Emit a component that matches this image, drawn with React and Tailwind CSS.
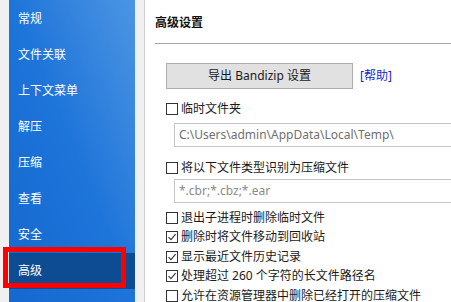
import React from "react";

const FONT = { fontFamily: '"Noto Sans", "Noto Sans CJK SC", sans-serif' };

function Box({ checked }) {
  return (
    <span className="w-[12px] h-[12px] border border-[#333333] bg-white flex items-center justify-center shrink-0">
      {checked && (
        <svg width="10" height="10" viewBox="0 0 10 10">
          <path d="M1.5 5.2 L4 7.6 L8.6 2.2" fill="none" stroke="#333" strokeWidth="1.1" />
        </svg>
      )}
    </span>
  );
}

function Check({ checked, label, h = "h-[16px]", mt = "" }) {
  return (
    <div className={`flex items-center ${h} ${mt}`}>
      <Box checked={checked} />
      <span className="ml-[3px] text-[12px] leading-[16px] text-[#1a1a1a] whitespace-nowrap">{label}</span>
    </div>
  );
}

export default function App() {
  const items = ["常规", "文件关联", "上下文菜单", "解压", "压缩", "查看", "安全", "高级"];
  return (
    <div className="relative w-[451px] h-[302px] overflow-hidden flex bg-[#f0f0f0]" style={FONT}>
      <div className="w-[9px] shrink-0" />
      <div className="w-[126px] shrink-0 bg-linear-to-tr from-[#1568cf] via-[#1d74d9] to-[#4b95e3] pt-[1px]">
        {items.map((t, i) => (
          <div
            key={t}
            className={`h-[36px] flex items-center pl-[9px] text-[12px] text-white ${i === 7 ? "bg-[#0d4c93]" : ""}`}
          >
            {t}
          </div>
        ))}
      </div>
      <div className="w-[9px] shrink-0" />
      <div className="flex-1 bg-white border-l border-[#cfcfcf] overflow-hidden">
        <div className="pl-[10px] pt-[15px] text-[12px] leading-[16px] font-bold text-[#111]">高级设置</div>
        <div className="ml-[10px] mt-[12px] h-px bg-[#a8a8a8]" />
        <div className="pl-[21px]">
          <div className="flex items-center mt-[19px]">
            <div className="w-[187px] h-[26px] bg-[#e1e1e1] border border-[#adadad] flex items-center justify-center text-[12px] text-[#1a1a1a]">
              导出 Bandizip 设置
            </div>
            <span className="ml-[7px] text-[12px] text-[#2323c8]">[帮助]</span>
          </div>
          <Check label="临时文件夹" mt="mt-[12px]" />
          <div className="ml-[8px] mt-[6px] h-[24px] w-[320px] border border-[#c4c4c4] flex items-center pl-[4px] text-[12px] text-[#707070] whitespace-nowrap">
            C:\Users\admin\AppData\Local\Temp\
          </div>
          <Check label="将以下文件类型识别为压缩文件" mt="mt-[13px]" />
          <div className="ml-[8px] mt-[3px] h-[24px] w-[320px] border border-[#c4c4c4] flex items-center pl-[4px] text-[12px] text-[#8a8a8a] whitespace-nowrap">
            *.cbr;*.cbz;*.ear
          </div>
          <div className="mt-[5px]">
            <Check label="退出子进程时删除临时文件" h="h-[19.5px]" />
            <Check checked label="删除时将文件移动到回收站" h="h-[19.5px]" />
            <Check checked label="显示最近文件历史记录" h="h-[19.5px]" />
            <Check checked label="处理超过 260 个字符的长文件路径名" h="h-[19.5px]" />
            <Check label="允许在资源管理器中删除已经打开的压缩文件" h="h-[19.5px]" />
          </div>
        </div>
      </div>
      <div className="absolute left-[3px] top-[247px] w-[123px] h-[41px] border-[5px] border-[#ff0000]" />
    </div>
  );
}
